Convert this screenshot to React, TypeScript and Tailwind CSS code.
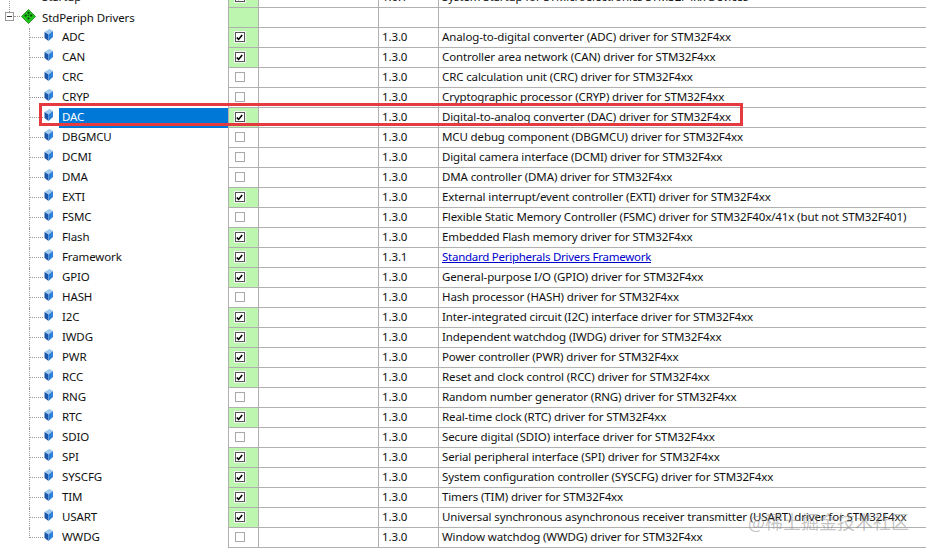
const rows: [string, boolean, string, string][] = [
  ["ADC", true, "1.3.0", "Analog-to-digital converter (ADC) driver for STM32F4xx"],
  ["CAN", true, "1.3.0", "Controller area network (CAN) driver for STM32F4xx"],
  ["CRC", false, "1.3.0", "CRC calculation unit (CRC) driver for STM32F4xx"],
  ["CRYP", false, "1.3.0", "Cryptographic processor (CRYP) driver for STM32F4xx"],
  ["DAC", true, "1.3.0", "Digital-to-analog converter (DAC) driver for STM32F4xx"],
  ["DBGMCU", false, "1.3.0", "MCU debug component (DBGMCU) driver for STM32F4xx"],
  ["DCMI", false, "1.3.0", "Digital camera interface (DCMI) driver for STM32F4xx"],
  ["DMA", false, "1.3.0", "DMA controller (DMA) driver for STM32F4xx"],
  ["EXTI", true, "1.3.0", "External interrupt/event controller (EXTI) driver for STM32F4xx"],
  ["FSMC", false, "1.3.0", "Flexible Static Memory Controller (FSMC) driver for STM32F40x/41x (but not STM32F401)"],
  ["Flash", true, "1.3.0", "Embedded Flash memory driver for STM32F4xx"],
  ["Framework", true, "1.3.1", "Standard Peripherals Drivers Framework"],
  ["GPIO", true, "1.3.0", "General-purpose I/O (GPIO) driver for STM32F4xx"],
  ["HASH", false, "1.3.0", "Hash processor (HASH) driver for STM32F4xx"],
  ["I2C", true, "1.3.0", "Inter-integrated circuit (I2C) interface driver for STM32F4xx"],
  ["IWDG", true, "1.3.0", "Independent watchdog (IWDG) driver for STM32F4xx"],
  ["PWR", true, "1.3.0", "Power controller (PWR) driver for STM32F4xx"],
  ["RCC", true, "1.3.0", "Reset and clock control (RCC) driver for STM32F4xx"],
  ["RNG", false, "1.3.0", "Random number generator (RNG) driver for STM32F4xx"],
  ["RTC", true, "1.3.0", "Real-time clock (RTC) driver for STM32F4xx"],
  ["SDIO", false, "1.3.0", "Secure digital (SDIO) interface driver for STM32F4xx"],
  ["SPI", true, "1.3.0", "Serial peripheral interface (SPI) driver for STM32F4xx"],
  ["SYSCFG", true, "1.3.0", "System configuration controller (SYSCFG) driver for STM32F4xx"],
  ["TIM", true, "1.3.0", "Timers (TIM) driver for STM32F4xx"],
  ["USART", true, "1.3.0", "Universal synchronous asynchronous receiver transmitter (USART) driver for STM32F4xx"],
  ["WWDG", false, "1.3.0", "Window watchdog (WWDG) driver for STM32F4xx"],
];

function Gem() {
  return (
    <svg width="10" height="12" viewBox="0 0 10 12" className="shrink-0">
      <path d="M0.5 3 L5.5 0 L9 2 L4.5 5.5 Z" fill="#9cc8f0" />
      <path d="M0.5 3 L4.5 5.5 L4.5 12 L0.5 9 Z" fill="#1c56a8" />
      <path d="M4.5 5.5 L9 2 L9 8 L4.5 12 Z" fill="#2f80d8" />
    </svg>
  );
}

function Diamond() {
  return (
    <svg width="15" height="15" viewBox="0 0 16 16" className="shrink-0 -translate-y-px">
      <path d="M8 0.5 L15.5 8 L8 15.5 L0.5 8 Z" fill="#22c51e" stroke="#0d7a10" strokeWidth="0.8" />
      <g fill="#063b08">
        <rect x="7" y="3" width="2" height="2" />
        <rect x="4" y="6" width="2" height="2" />
        <rect x="10" y="6" width="2" height="2" />
        <rect x="7" y="9" width="2" height="2" />
        <rect x="7" y="6" width="2" height="1" />
      </g>
    </svg>
  );
}

function Check({ on }: { on: boolean }) {
  return (
    <span
      className={
        on
          ? "flex h-[10px] w-[10px] items-center justify-center border border-[#555] bg-white shadow-[0_0_0_1px_#f4f4f4]"
          : "flex h-[10px] w-[10px] items-center justify-center border border-[#a8a8a8] bg-white"
      }
    >
      {on && (
        <svg width="7" height="7" viewBox="0 0 7 7">
          <path d="M0.8 3.5 L2.6 5.4 L6.2 1" fill="none" stroke="#000" strokeWidth="1.6" />
        </svg>
      )}
    </span>
  );
}

function Row({ name, on, ver, desc, last }: { name: string; on: boolean; ver: string; desc: string; last: boolean }) {
  const selected = name === "DAC";
  return (
    <div className="grid h-5 grid-cols-[229px_30px_120px_60px_487px] leading-[17px]">
      <div className="relative flex h-5 border-r border-[#b0b0b0] pl-[44px]">
        <span className={last ? "absolute left-[29px] top-0 h-[10px] border-l border-dotted border-[#999]" : "absolute left-[29px] top-0 h-5 border-l border-dotted border-[#999]"} />
        <span className="absolute left-[30px] top-[9px] w-[13px] border-t border-dotted border-[#999]" />
        <span className="mt-px h-3"><Gem /></span>
        <span
          className={
            selected
              ? "ml-[5px] h-5 flex-1 bg-[#0078d7] pl-[3px] text-white"
              : "ml-2 h-5 flex-1"
          }
        >
          {name}
        </span>
      </div>
      <div className={on ? "flex items-center justify-center border-b border-r border-[#b0b0b0] bg-[#bdf6ae] pb-px pr-2" : "flex items-center justify-center border-b border-r border-[#b0b0b0] pb-px pr-2"}>
        <Check on={on} />
      </div>
      <div className="border-b border-r border-[#b0b0b0]" />
      <div className="border-b border-r border-[#b0b0b0] pl-[3px]">{ver}</div>
      <div className="truncate border-b border-[#b0b0b0] pl-[3px]">
        {name === "Framework" ? <span className="tracking-[-0.26px] text-[#0000cc] underline">{desc}</span> : desc}
      </div>
    </div>
  );
}

export default function App() {
  return (
    <div className="relative h-[548px] w-[928px] overflow-hidden bg-white font-['Noto_Sans',sans-serif] text-[11.5px] tracking-[-0.12px] text-[#111]">
      <div className="-mt-3">
        <div className="grid h-5 grid-cols-[229px_30px_120px_60px_487px] leading-[17px]">
          <div className="relative border-r border-[#b0b0b0] pl-[42px]">
            <span className="absolute left-[9px] top-0 h-6 border-l border-dotted border-[#999]" />
            Startup
          </div>
          <div className="flex items-center justify-center border-b border-r border-[#b0b0b0] bg-[#bdf6ae] pb-px pr-2">
            <Check on={true} />
          </div>
          <div className="border-b border-r border-[#b0b0b0]" />
          <div className="border-b border-r border-[#b0b0b0] pl-[3px]">1.0.1</div>
          <div className="truncate border-b border-[#b0b0b0] pl-[3px]">System Startup for STMicroelectronics STM32F4xx Devices</div>
        </div>
        <div className="grid h-5 grid-cols-[229px_30px_120px_60px_487px] leading-[17px]">
          <div className="relative flex items-center gap-[6px] border-r border-[#b0b0b0] pb-[2px] pl-[21px]">
            <span className="absolute left-[5px] top-1 flex h-[9px] w-[9px] items-center justify-center border border-[#999] bg-white">
              <span className="h-px w-[5px] bg-[#333]" />
            </span>
            <span className="absolute left-[14px] top-2 w-[6px] border-t border-dotted border-[#999]" />
            <Diamond />
            <span>StdPeriph Drivers</span>
          </div>
          <div className="border-b border-r border-[#b0b0b0] bg-[#bdf6ae]" />
          <div className="border-b border-r border-[#b0b0b0]" />
          <div className="border-b border-r border-[#b0b0b0]" />
          <div className="border-b border-[#b0b0b0]" />
        </div>
        {rows.map((r, i) => (
          <Row key={r[0]} name={r[0]} on={r[1]} ver={r[2]} desc={r[3]} last={i === rows.length - 1} />
        ))}
      </div>
      <div className="pointer-events-none absolute left-[39px] top-[103px] h-[23px] w-[704px] border-[3px] border-[#e53a3f]" />
      <div className="pointer-events-none absolute left-[748px] top-[508px] font-['Noto_Sans_CJK_SC',sans-serif] text-[18px] tracking-normal text-[#8a8a8a]/50">
        @稀土掘金技术社区
      </div>
    </div>
  );
}
